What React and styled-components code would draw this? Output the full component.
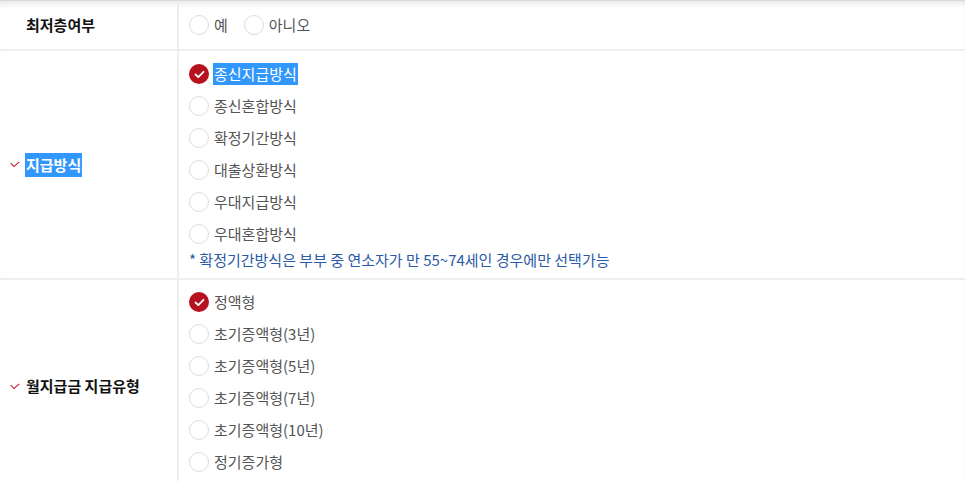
import React from "react";
import styled, { createGlobalStyle } from "styled-components";

const Global = createGlobalStyle`
  html, body {
    margin: 0;
    padding: 0;
    background: #fff;
    font-family: "Noto Sans CJK KR", "Noto Sans", sans-serif;
  }
`;

const Table = styled.div`
  width: 100%;
  border-top: 1px solid #d8d8d8;
  box-shadow: inset 0 7px 8px -6px rgba(0, 0, 0, 0.14);
`;

const Row = styled.div`
  display: flex;
  align-items: stretch;
  border-bottom: 2px solid #eeeeee;
  min-height: ${(props) => props.minHeight || "auto"};
`;

const LabelCell = styled.div`
  width: 179px;
  flex-shrink: 0;
  border-right: 2px solid #eeeeee;
  display: flex;
  align-items: center;
  padding-left: 10px;
  box-sizing: border-box;
`;

const CheckSlot = styled.span`
  width: 15px;
  display: inline-flex;
  align-items: center;
  svg {
    visibility: ${(props) => (props.show ? "visible" : "hidden")};
  }
`;

const LabelText = styled.span`
  font-size: 15px;
  font-weight: 700;
  line-height: 24px;
  padding: 0 1px;
  background: ${(props) => (props.selected ? "#3297fd" : "transparent")};
  color: ${(props) => (props.selected ? "#fff" : "#111")};
`;

const ValueCell = styled.div`
  flex: 1;
  padding: ${(props) => props.pad || "0 10px"};
  display: flex;
  flex-direction: ${(props) => (props.inline ? "row" : "column")};
  align-items: ${(props) => (props.inline ? "center" : "flex-start")};
  gap: ${(props) => (props.inline ? "15px" : "0")};
`;

const Option = styled.label`
  display: flex;
  align-items: center;
  height: 32px;
  gap: 4px;
  cursor: pointer;
`;

const Circle = styled.span`
  width: 20px;
  height: 20px;
  border-radius: 50%;
  box-sizing: border-box;
  border: ${(props) => (props.checked ? "none" : "1px solid #dcdcdc")};
  background: ${(props) => (props.checked ? "#b5111e" : "#fff")};
  display: inline-flex;
  align-items: center;
  justify-content: center;
`;

const OptionText = styled.span`
  font-size: 15px;
  color: ${(props) => (props.selected ? "#fff" : "#555")};
  background: ${(props) => (props.selected ? "#3297fd" : "transparent")};
  line-height: 22px;
  padding: 0 1px;
`;

const Note = styled.p`
  margin: 0;
  font-size: 15px;
  line-height: 20px;
  color: #2b5aa8;
`;

function Radio({ label, checked, selected }) {
  return (
    <Option>
      <Circle checked={checked}>
        {checked && (
          <svg width="11" height="9" viewBox="0 0 11 9" fill="none">
            <path d="M1.5 4.5 L4.3 7.2 L9.5 1.8" stroke="#fff" strokeWidth="1.8" strokeLinecap="round" strokeLinejoin="round" />
          </svg>
        )}
      </Circle>
      <OptionText selected={selected}>{label}</OptionText>
    </Option>
  );
}

function Label({ text, required, selected }) {
  return (
    <LabelCell>
      <CheckSlot show={required}>
        <svg width="10" height="7" viewBox="0 0 10 7" fill="none">
          <path d="M0.8 2.2 L4 5.6 L9.2 0.8" stroke="#c4162a" strokeWidth="1.1" />
        </svg>
      </CheckSlot>
      <LabelText selected={selected}>{text}</LabelText>
    </LabelCell>
  );
}

const payTypes = ["종신지급방식", "종신혼합방식", "확정기간방식", "대출상환방식", "우대지급방식", "우대혼합방식"];
const monthlyTypes = ["정액형", "초기증액형(3년)", "초기증액형(5년)", "초기증액형(7년)", "초기증액형(10년)", "정기증가형"];

export default function App() {
  return (
    <>
      <Global />
      <Table>
        <Row minHeight="48px">
          <Label text="최저층여부" />
          <ValueCell inline>
            <Radio label="예" />
            <Radio label="아니오" />
          </ValueCell>
        </Row>
        <Row>
          <Label text="지급방식" required selected />
          <ValueCell pad="7px 10px 8px">
            {payTypes.map((t, i) => (
              <Radio key={t} label={t} checked={i === 0} selected={i === 0} />
            ))}
            <Note>* 확정기간방식은 부부 중 연소자가 만 55~74세인 경우에만 선택가능</Note>
          </ValueCell>
        </Row>
        <Row>
          <Label text="월지급금 지급유형" required />
          <ValueCell pad="6px 10px 14px">
            {monthlyTypes.map((t, i) => (
              <Radio key={t} label={t} checked={i === 0} />
            ))}
          </ValueCell>
        </Row>
      </Table>
    </>
  );
}
